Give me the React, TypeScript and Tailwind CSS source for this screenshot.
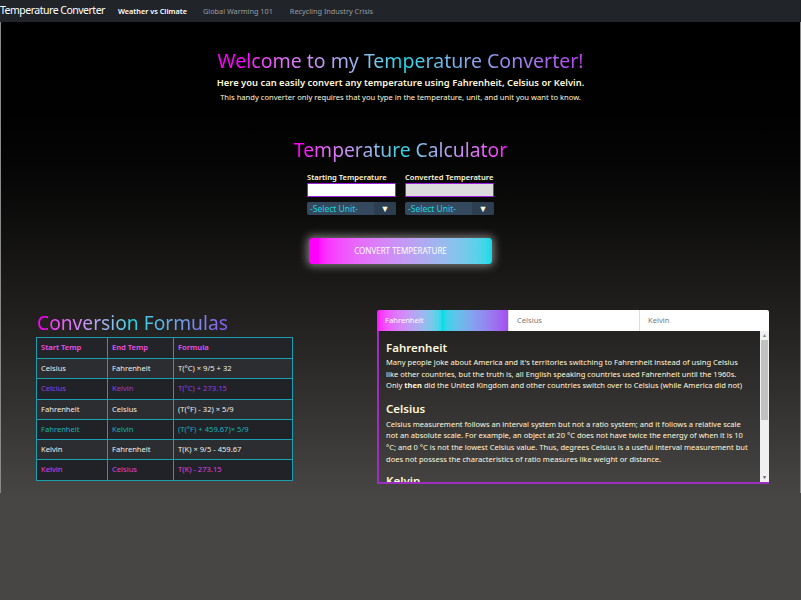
import React from "react";

const grad = "bg-clip-text text-transparent";

const rows = [
  { a: "Celsius", b: "Fahrenheit", c: "T(°C) × 9/5 + 32", color: "text-[#f3f0e6]", bg: "bg-[#2b2d31]" },
  { a: "Celcius", b: "Kelvin", c: "T(°C) + 273.15", color: "text-[#9b3ee0]", bg: "bg-[#202227]" },
  { a: "Fahrenheit", b: "Celsius", c: "(T(°F) - 32) × 5/9", color: "text-[#f3f0e6]", bg: "bg-[#2b2d31]" },
  { a: "Fahrenheit", b: "Kelvin", c: "(T(°F) + 459.67)× 5/9", color: "text-[#17b3bd]", bg: "bg-[#202227]" },
  { a: "Kelvin", b: "Fahrenheit", c: "T(K) × 9/5 - 459.67", color: "text-[#f3f0e6]", bg: "bg-[#2b2d31]" },
  { a: "Kelvin", b: "Celsius", c: "T(K) - 273.15", color: "text-[#e040e0]", bg: "bg-[#202227]" },
];

function UnitSelect() {
  return (
    <div className="flex h-[13px] w-[89px] bg-[#34495e] rounded-[2px] overflow-hidden">
      <div className="flex-1 text-[8.5px] leading-[13px] pl-[3px] text-[#1ad6e0]">-Select Unit-</div>
      <div className="w-[22px] bg-[#2c3e50] flex items-center justify-center text-[9px] text-[#fff8dc]">▼</div>
    </div>
  );
}

export default function App() {
  return (
    <div className="min-h-screen bg-[#484644]" style={{ fontFamily: '"Noto Sans", "Open Sans", sans-serif' }}>
      <nav className="h-[22px] bg-[#212529] flex items-center">
        <span className="text-[10.5px] text-white tracking-[-0.5px]">Temperature Converter</span>
        <span className="ml-[13px] text-[7.3px] text-white font-semibold">Weather vs Climate</span>
        <span className="ml-[16px] text-[7.3px] text-[#9a9da0]">Global Warming 101</span>
        <span className="ml-[17px] text-[7.3px] text-[#9a9da0]">Recycling Industry Crisis</span>
      </nav>
      <div className="h-[471px] border-x border-[#8a8a8a] bg-gradient-to-b from-[#000000] to-[#474543]">
        <div className="pt-[27px] flex flex-col items-center">
          <h1 className={`text-[19.5px] leading-[24px] ${grad} bg-gradient-to-r from-[#ff00ff] from-[8%] via-[#00d8e8] via-[50%] to-[#b63cf2]`}>
            Welcome to my Temperature Converter!
          </h1>
          <p className="mt-[3px] text-[9.4px] leading-[13px] font-semibold text-[#fff8dc]">
            Here you can easily convert any temperature using Fahrenheit, Celsius or Kelvin.
          </p>
          <p className="mt-[3px] text-[7.6px] leading-[11px] text-[#fff8dc]">
            This handy converter only requires that you type in the temperature, unit, and unit you want to know.
          </p>
          <h2 className={`mt-[35px] text-[19.3px] leading-[24px] ${grad} bg-gradient-to-r from-[#ff00ff] from-[5%] via-[#00d8e8] to-[#ff00ff]`}>
            Temperature Calculator
          </h2>
          <div className="mt-[10px] flex gap-[9px]">
            <div className="flex flex-col">
              <label className="text-[7.6px] leading-[10px] font-semibold text-[#fff8dc]">Starting Temperature</label>
              <div className="mt-[1px] h-[14px] w-[89px] bg-white border border-[#a020e0] rounded-[1px]" />
              <div className="mt-[5px]"><UnitSelect /></div>
            </div>
            <div className="flex flex-col">
              <label className="text-[7.6px] leading-[10px] font-semibold text-[#fff8dc]">Converted Temperature</label>
              <div className="mt-[1px] h-[14px] w-[89px] bg-[#dcdcdc] border border-[#a020e0] rounded-[1px]" />
              <div className="mt-[5px]"><UnitSelect /></div>
            </div>
          </div>
          <button className="mt-[23px] h-[26px] w-[183px] rounded-[3px] bg-gradient-to-r from-[#ff00ff] from-[5%] to-[#00dce6] text-[8px] text-white shadow-[0_0_8px_2px_rgba(255,255,255,0.45)]">
            CONVERT TEMPERATURE
          </button>
        </div>
        <div className="mt-[47px] flex items-start">
          <div className="ml-[35px] w-[257px]">
            <h2 className={`text-[19.2px] leading-[24px] pl-[1px] ${grad} bg-gradient-to-r from-[#ff00ff] from-[5%] via-[#00d8e8] to-[#8a5af0] inline-block`}>
              Conversion Formulas
            </h2>
            <table className="mt-[1px] w-[257px] border-collapse text-[7.6px]">
              <thead>
                <tr className="h-[21px] bg-[#222429]">
                  <th className="border border-[#1b9fb0] text-left pl-[4px] font-semibold text-[#f050e8] w-[71px]">Start Temp</th>
                  <th className="border border-[#1b9fb0] text-left pl-[4px] font-semibold text-[#f050e8] w-[66px]">End Temp</th>
                  <th className="border border-[#1b9fb0] text-left pl-[4px] font-semibold text-[#f050e8]">Formula</th>
                </tr>
              </thead>
              <tbody>
                {rows.map((r, i) => (
                  <tr key={i} className={`h-[20.3px] ${r.bg} ${r.color}`}>
                    <td className="border border-[#1b9fb0] pl-[4px]">{r.a}</td>
                    <td className="border border-[#1b9fb0] pl-[4px]">{r.b}</td>
                    <td className="border border-[#1b9fb0] pl-[4px]">{r.c}</td>
                  </tr>
                ))}
              </tbody>
            </table>
          </div>
          <div className="ml-[84px] mt-[-1px] w-[392px]">
            <div className="flex h-[21px] text-[7.6px] leading-[21px]">
              <div className="w-[131px] bg-gradient-to-r from-[#ff00ff] via-[#00dce6] to-[#a64cf0] text-white pl-[8px] rounded-tl-[2px]">Fahrenheit</div>
              <div className="w-[131px] bg-white text-[#777] pl-[8px] border-l border-[#ddd]">Celsius</div>
              <div className="w-[130px] bg-white text-[#777] pl-[8px] border-l border-[#ddd] rounded-tr-[2px]">Kelvin</div>
            </div>
            <div className="h-[153px] flex border-l-2 border-b-2 border-[#9c2fc0]">
              <div className="flex-1 overflow-hidden pl-[7px] pr-[12px] text-[#fff8dc]">
                <h3 className="mt-[9px] text-[11.5px] leading-[15px] font-semibold">Fahrenheit</h3>
                <p className="mt-[2px] text-[7.55px] leading-[11.6px]">
                  Many people joke about America and it's territories switching to Fahrenheit instead of using Celsius like other countries, but the truth is, all English speaking countries used Fahrenheit until the 1960s. Only <b>then</b> did the United Kingdom and other countries switch over to Celsius (while America did not)
                </p>
                <h3 className="mt-[9px] text-[11.5px] leading-[15px] font-semibold">Celsius</h3>
                <p className="mt-[3px] text-[7.55px] leading-[11.6px]">
                  Celsius measurement follows an interval system but not a ratio system; and it follows a relative scale not an absolute scale. For example, an object at 20 °C does not have twice the energy of when it is 10 °C; and 0 °C is not the lowest Celsius value. Thus, degrees Celsius is a useful interval measurement but does not possess the characteristics of ratio measures like weight or distance.
                </p>
                <h3 className="mt-[8px] text-[11.5px] leading-[15px] font-semibold">Kelvin</h3>
              </div>
              <div className="w-[9px] bg-[#f0f0f0] flex flex-col items-center">
                <div className="h-[9px] text-[5px] leading-[9px] text-[#888]">▲</div>
                <div className="w-[7px] h-[80px] bg-[#c1c1c1]" />
                <div className="flex-1" />
                <div className="h-[9px] text-[5px] leading-[9px] text-[#555]">▼</div>
              </div>
            </div>
          </div>
        </div>
      </div>
    </div>
  );
}
